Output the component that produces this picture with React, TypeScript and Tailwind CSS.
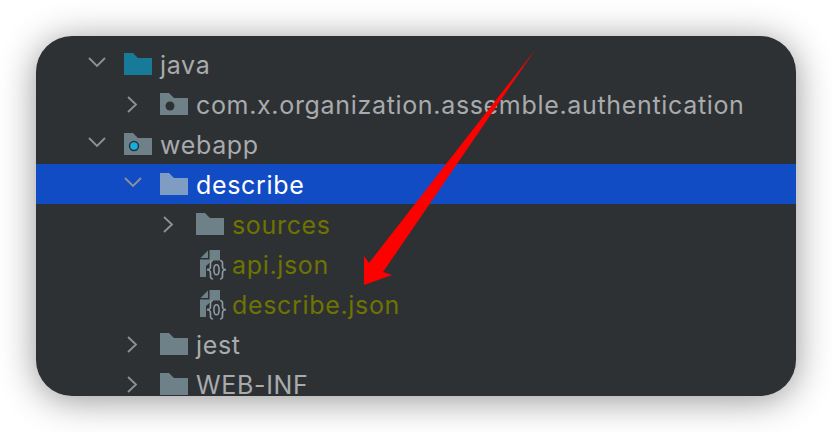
import React from 'react'

type Row = {
  label: string
  depth: number
  chevron?: 'open' | 'closed'
  icon: 'folder' | 'source' | 'package' | 'web' | 'json'
  tone?: 'plain' | 'selected' | 'olive'
}

const rows: Row[] = [
  { label: 'java', depth: 0, chevron: 'open', icon: 'source' },
  { label: 'com.x.organization.assemble.authentication', depth: 1, chevron: 'closed', icon: 'package' },
  { label: 'webapp', depth: 0, chevron: 'open', icon: 'web' },
  { label: 'describe', depth: 1, chevron: 'open', icon: 'folder', tone: 'selected' },
  { label: 'sources', depth: 2, chevron: 'closed', icon: 'folder', tone: 'olive' },
  { label: 'api.json', depth: 2, icon: 'json', tone: 'olive' },
  { label: 'describe.json', depth: 2, icon: 'json', tone: 'olive' },
  { label: 'jest', depth: 1, chevron: 'closed', icon: 'folder' },
  { label: 'WEB-INF', depth: 1, chevron: 'closed', icon: 'folder' },
]

const FOLDER = 'M0 0H9L14 5H28V22H0Z'

function Chevron({ kind }: { kind?: 'open' | 'closed' }) {
  return (
    <svg width="18" height="18" viewBox="0 0 18 18" fill="none" className="shrink-0 text-[#8e9296]">
      {kind === 'open' && <path d="M1 3L9 11L17 3" stroke="currentColor" strokeWidth="1.8" />}
      {kind === 'closed' && <path d="M4 2L12 9.5L4 17" stroke="currentColor" strokeWidth="1.8" />}
    </svg>
  )
}

function JsonIcon() {
  return (
    <svg width="30" height="32" viewBox="0 0 30 32" fill="none" className="shrink-0">
      <path d="M2.5 10L10 2.5V10Z" fill="#6e8088" />
      <path d="M11.5 2H22V12.5H14L8 18V29H2V11.5H11.5Z" fill="#6e8088" />
      <path
        d="M15 12.5C12 12.5 12.5 15 12.5 18C12.5 20.5 12 21.5 9 21.7C12 22 12.5 23 12.5 25.5C12.5 28.5 12 31 15 31"
        stroke="#8a9aa1"
        strokeWidth="1.7"
      />
      <path
        d="M22 12.5C25 12.5 24.5 15 24.5 18C24.5 20.5 25 21.5 28 21.7C25 22 24.5 23 24.5 25.5C24.5 28.5 25 31 22 31"
        stroke="#8a9aa1"
        strokeWidth="1.7"
      />
      <ellipse cx="18.5" cy="21.7" rx="2.6" ry="5" stroke="#8a9aa1" strokeWidth="1.6" />
    </svg>
  )
}

function RowIcon({ icon, selected }: { icon: Row['icon']; selected: boolean }) {
  if (icon === 'json') return <JsonIcon />
  const fill = selected ? '#7f9cc2' : icon === 'source' ? '#187a99' : '#6e8088'
  return (
    <svg width="28" height="22" viewBox="0 0 28 22" className="shrink-0">
      <path d={FOLDER} fill={fill} />
      {icon === 'package' && <circle cx="10" cy="13" r="4.5" fill="#2e3134" />}
      {icon === 'web' && (
        <circle cx="10" cy="13" r="4.5" fill="#12b0e0" stroke="#2e3134" strokeWidth="1.5" />
      )}
    </svg>
  )
}

function TreeRow({ row }: { row: Row }) {
  const selected = row.tone === 'selected'
  const text = selected ? 'text-white' : row.tone === 'olive' ? 'text-[#6f7300]' : 'text-[#a8abad]'
  const indent = row.depth === 0 ? 'pl-[52px]' : row.depth === 1 ? 'pl-[88px]' : 'pl-[124px]'
  return (
    <div className={`flex h-10 shrink-0 items-center ${indent} ${selected ? 'bg-[#114cc4]' : ''}`}>
      <Chevron kind={row.chevron} />
      {row.icon === 'json' ? (
        <div className="ml-[20px] mr-[4px] flex w-[30px] justify-start">
          <RowIcon icon={row.icon} selected={selected} />
        </div>
      ) : (
        <div className="ml-[18px] mr-[8px]">
          <RowIcon icon={row.icon} selected={selected} />
        </div>
      )}
      <span className={`whitespace-nowrap pt-[2px] text-[25px] leading-10 tracking-[0.67px] ${text}`}>{row.label}</span>
    </div>
  )
}

export default function App() {
  return (
    <div className="relative flex h-[432px] w-[832px] items-center justify-center overflow-hidden bg-white font-['Inter',sans-serif]">
      <div className="flex h-[360px] w-[760px] flex-col overflow-hidden rounded-[36px] bg-[#2e3134] pt-2 shadow-[0_4px_36px_rgba(0,0,0,0.42)]">
        {rows.map((row) => (
          <TreeRow key={row.label} row={row} />
        ))}
      </div>
      {/* annotation arrow drawn over the tree */}
      <svg width="832" height="432" viewBox="0 0 832 432" className="pointer-events-none absolute inset-0">
        <path d="M535 50L369 263L364 256L364 285L392 275L383 272Z" fill="#ff0000" />
      </svg>
    </div>
  )
}
